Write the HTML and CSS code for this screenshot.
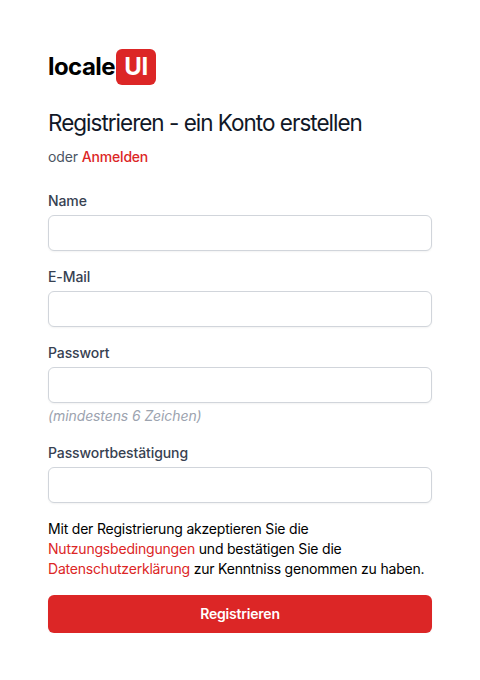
FILE: index.html
```html
<!DOCTYPE html>
<html lang="de">
<head>
<meta charset="utf-8">
<title>Registrieren</title>
<link rel="stylesheet" href="styles.css">
</head>
<body>
<main class="page">
  <div class="logo"><span class="logo-word">locale</span><span class="logo-badge">UI</span></div>
  <h1 class="title">Registrieren - ein Konto erstellen</h1>
  <p class="sub">oder <a class="link link-medium" href="#">Anmelden</a></p>
  <form class="form">
    <div class="field">
      <label class="label">Name</label>
      <input class="input" type="text">
    </div>
    <div class="field">
      <label class="label">E-Mail</label>
      <input class="input" type="email">
    </div>
    <div class="field field-hint">
      <label class="label">Passwort</label>
      <input class="input" type="password">
      <p class="hint">(mindestens 6 Zeichen)</p>
    </div>
    <div class="field">
      <label class="label">Passwortbestätigung</label>
      <input class="input" type="password">
    </div>
    <p class="terms">Mit der Registrierung akzeptieren Sie die <a class="link" href="#">Nutzungsbedingungen</a> und bestätigen Sie die <a class="link" href="#">Datenschutzerklärung</a> zur Kenntniss genommen zu haben.</p>
    <button class="submit" type="button">Registrieren</button>
  </form>
</main>
</body>
</html>
```
FILE: styles.css
```css
* { box-sizing: border-box; }
html, body { margin: 0; background: #fff; }
body { font-family: Inter, "Liberation Sans", sans-serif; font-size: 14px; line-height: 20px; }
.page { padding: 48px 48px 0; }
.logo { display: flex; align-items: center; gap: 1px; height: 37px; }
.logo-word { font-size: 24px; font-weight: 700; line-height: 32px; color: #000; letter-spacing: -0.55px; }
.logo-badge { display: flex; align-items: center; justify-content: center; width: 40px; height: 36px; background: #dc2626; color: #fff; border-radius: 6px; font-size: 24px; font-weight: 700; letter-spacing: -0.5px; }
.title { margin: 22px 0 0; font-size: 22.5px; line-height: 32px; font-weight: 400; letter-spacing: -1px; color: #111827; }
.sub { margin: 8px 0 0; color: #4b5563; letter-spacing: -0.1px; }
.link { color: #dc2626; text-decoration: none; }
.link-medium { font-weight: 500; letter-spacing: -0.2px; }
.form { margin-top: 24px; display: flex; flex-direction: column; }
.field { display: flex; flex-direction: column; margin-bottom: 16px; }
.field-hint { margin-bottom: 17px; }
.label { font-weight: 500; color: #374151; margin-bottom: 4px; letter-spacing: -0.1px; }
.input { display: block; width: 100%; height: 36px; padding: 8px 12px; background: #fff; border: 1px solid #d1d5db; border-radius: 6px; box-shadow: 0 1px 2px rgba(0, 0, 0, .05); outline: none; }
.hint { margin: 3px 0 0; font-style: italic; color: #9ca3af; letter-spacing: -0.1px; }
.terms { margin: 0; color: #000; letter-spacing: -0.2px; }
.submit { margin-top: 16px; height: 38px; border: 0; border-radius: 6px; background: #dc2626; color: #fff; font: 600 14px/20px Inter, "Liberation Sans", sans-serif; letter-spacing: -0.2px; box-shadow: 0 1px 2px rgba(0, 0, 0, .05); }
```
